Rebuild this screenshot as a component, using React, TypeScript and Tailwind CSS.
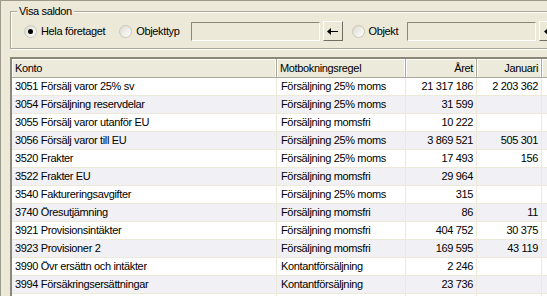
import React from "react";

type Row = { konto: string; regel: string; aret: string; januari: string };

const rows: Row[] = [
  { konto: "3051 Försälj varor 25% sv", regel: "Försäljning 25% moms", aret: "21 317 186", januari: "2 203 362" },
  { konto: "3054 Försäljning reservdelar", regel: "Försäljning 25% moms", aret: "31 599", januari: "" },
  { konto: "3055 Försälj varor utanför EU", regel: "Försäljning momsfri", aret: "10 222", januari: "" },
  { konto: "3056 Försälj varor till EU", regel: "Försäljning 25% moms", aret: "3 869 521", januari: "505 301" },
  { konto: "3520 Frakter", regel: "Försäljning 25% moms", aret: "17 493", januari: "156" },
  { konto: "3522 Frakter EU", regel: "Försäljning momsfri", aret: "29 964", januari: "" },
  { konto: "3540 Faktureringsavgifter", regel: "Försäljning 25% moms", aret: "315", januari: "" },
  { konto: "3740 Öresutjämning", regel: "Försäljning momsfri", aret: "86", januari: "11" },
  { konto: "3921 Provisionsintäkter", regel: "Försäljning momsfri", aret: "404 752", januari: "30 375" },
  { konto: "3923 Provisioner 2", regel: "Försäljning momsfri", aret: "169 595", januari: "43 119" },
  { konto: "3990 Övr ersättn och intäkter", regel: "Kontantförsäljning", aret: "2 246", januari: "" },
  { konto: "3994 Försäkringsersättningar", regel: "Kontantförsäljning", aret: "23 736", januari: "" },
  { konto: "", regel: "", aret: "", januari: "" },
];

const cols = "grid grid-cols-[265px_129px_71px_65px_120px]";

function Radio({ checked, label }: { checked?: boolean; label: string }) {
  return (
    <div className="flex items-center gap-[4px]">
      <span className="flex h-[13px] w-[13px] items-center justify-center rounded-full border border-[#c9c7ba] bg-gradient-to-br from-[#dcdad0] to-white">
        {checked && <span className="h-[5px] w-[5px] rounded-full bg-black" />}
      </span>
      <span>{label}</span>
    </div>
  );
}

function ArrowButton() {
  return (
    <button
      type="button"
      className="flex h-[20px] w-[20px] items-center justify-center border border-t-white border-l-white border-b-[#716f64] border-r-[#716f64] bg-[#ece9d8]"
    >
      <svg width="11" height="7" viewBox="0 0 11 7">
        <path d="M0 3.5 L4 0 L4 7 Z" fill="#000" />
        <rect x="3" y="3" width="8" height="1" fill="#000" />
      </svg>
    </button>
  );
}

function Field() {
  return <div className="h-[19px] w-[129px] border border-t-[#8b887a] border-l-[#8b887a] border-b-white border-r-white bg-[#ece9d8]" />;
}

export default function App() {
  return (
    <div
      className="h-[296px] w-[547px] overflow-hidden border-t border-l border-[#9d9a8c] bg-[#ece9d8] text-[11px] tracking-[-0.35px] text-black"
      style={{ fontFamily: '"Liberation Sans", Arial, sans-serif' }}
    >
      <div className="relative ml-[9px] mt-[10px] h-[38px] w-[620px] border border-[#aca899] shadow-[inset_1px_1px_0_white,1px_1px_0_white]">
        <span className="absolute left-[6px] top-[-8px] bg-[#ece9d8] px-[2px] leading-[14px]">Visa saldon</span>
        <div className="flex items-center pl-[13px] pt-[9px]">
          <Radio checked label="Hela företaget" />
          <div className="ml-[14px]">
            <Radio label="Objekttyp" />
          </div>
          <div className="ml-[11px]">
            <Field />
          </div>
          <div className="ml-[3px]">
            <ArrowButton />
          </div>
          <div className="ml-[9px]">
            <Radio label="Objekt" />
          </div>
          <div className="ml-[9px]">
            <Field />
          </div>
          <div className="ml-[3px]">
            <ArrowButton />
          </div>
        </div>
      </div>

      <div className="ml-[9px] mt-[8px] w-[700px] border-t-2 border-l-2 border-t-[#8b887a] border-l-[#8b887a] bg-white">
        <div className={`${cols} h-[19px] border-b border-[#aca899] bg-[#ebeadb]`}>
          {["Konto", "Motbokningsregel", "Året", "Januari", ""].map((h, i) => (
            <div
              key={i}
              className={`flex items-center border-r border-r-[#aca899] px-[3px] shadow-[inset_-1px_0_0_white,inset_1px_1px_0_white] ${
                i >= 2 && i < 4 ? "justify-end" : ""
              }`}
            >
              {h}
            </div>
          ))}
        </div>
        {rows.map((r, idx) => (
          <div
            key={idx}
            className={`${cols} h-[18px] border-b border-[#ece9d8] ${idx % 2 === 0 ? "bg-white" : "bg-[#f1f0f4]"}`}
          >
            <div className="flex items-center border-r border-[#ece9d8] px-[3px]">{r.konto}</div>
            <div className="flex items-center border-r border-[#ece9d8] px-[4px]">{r.regel}</div>
            <div className="flex items-center justify-end border-r border-[#ece9d8] px-[3px]">{r.aret}</div>
            <div className="flex items-center justify-end border-r border-[#ece9d8] px-[3px]">{r.januari}</div>
            <div />
          </div>
        ))}
      </div>
    </div>
  );
}
